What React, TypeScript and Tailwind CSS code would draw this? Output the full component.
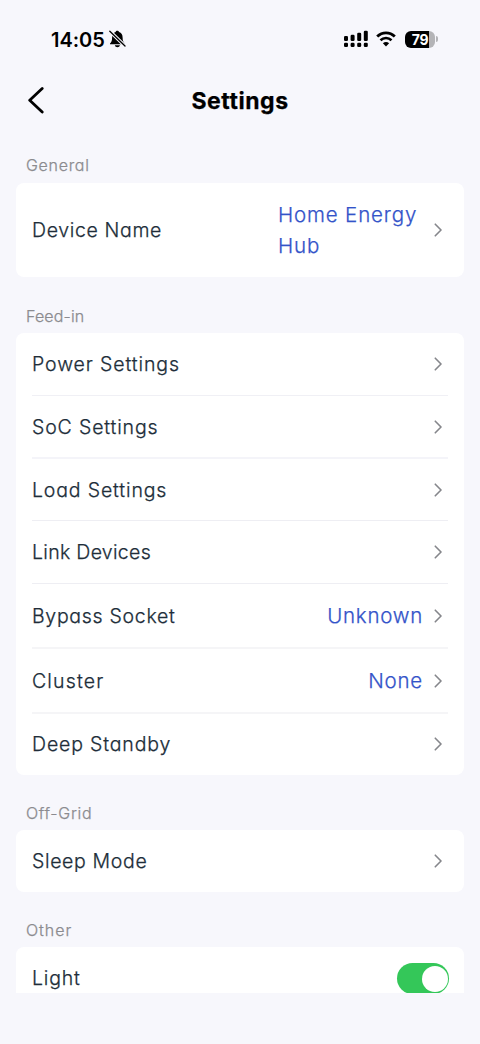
import React from "react";

function Chevron() {
  return (
    <svg className="h-[14px] w-2 shrink-0" viewBox="0 0 8 14" fill="none">
      <path d="M1.3 1.2 L7 7 L1.3 12.8" stroke="#85868b" strokeWidth="1.6" strokeLinecap="round" strokeLinejoin="round" />
    </svg>
  );
}

function SectionTitle({ children, className }: { children: React.ReactNode; className: string }) {
  return (
    <h2 className={`flex items-center pl-[10px] text-[16px] leading-5 text-[#8b8b8f] ${className}`}>
      <span>{children}</span>
    </h2>
  );
}

type RowProps = { label: string; tracking: string; size: string; value?: string; valueTracking?: string };

function Row({ label, tracking, size, value, valueTracking = "" }: RowProps) {
  return (
    <div className={`mx-4 flex items-center justify-between ${size}`}>
      <span className={`whitespace-nowrap pt-[1.5px] text-[19.5px] text-[#202d39] ${tracking}`}>{label}</span>
      <div className="flex items-center gap-[11px] pr-[6px]">
        {value && <span className={`whitespace-nowrap pt-[2px] text-[20.5px] text-[#3353c9] ${valueTracking}`}>{value}</span>}
        <Chevron />
      </div>
    </div>
  );
}

function StatusBar() {
  return (
    <div className="flex h-[78px] items-center justify-between pl-[51px] pr-[42px] [-webkit-text-stroke:0px]">
      <div className="flex items-center gap-1 text-black">
        <span className="pt-px text-[20px] font-semibold leading-6 tracking-[-0.05px]">14:05</span>
        <svg className="h-[18px] w-[17px]" viewBox="0 0 17 18">
          <path d="M8.3 .8c.9 0 1.5.5 1.7 1.2 2.5.8 3.6 2.8 3.6 5.4 0 3.3.8 4.6 2.2 6v.9H1v-.9c1.4-1.4 2.1-2.7 2.1-6 0-2.6 1.1-4.6 3.5-5.4.2-.7.8-1.2 1.7-1.2z" fill="#000" />
          <path d="M5.8 15.3h5.2c-.3 1.2-1.3 1.9-2.6 1.9s-2.3-.7-2.6-1.9z" fill="#000" />
          <path d="M.8 1.2 L16 16" stroke="#f7f7fc" strokeWidth="3.4" />
          <path d="M.8 1.2 L16 16" stroke="#000" strokeWidth="1.3" strokeLinecap="round" />
        </svg>
      </div>
      <div className="flex items-center">
        <svg className="h-[18px] w-6" viewBox="0 0 24 18">
          <g fill="#000">
            <rect x="0" y="6" width="4" height="5" rx="1.3" />
            <rect x="6.6" y="4.7" width="4" height="6.3" rx="1.3" />
            <rect x="13.2" y="2.8" width="4" height="8.2" rx="1.3" />
            <rect x="19.8" y="0.8" width="4" height="10.2" rx="1.3" />
            <rect x="0" y="12.7" width="4" height="4.3" rx="1.3" />
            <rect x="6.6" y="12.7" width="4" height="4.3" rx="1.3" />
            <rect x="13.2" y="12.7" width="4" height="4.3" rx="1.3" />
            <rect x="19.8" y="12.7" width="4" height="4.3" rx="1.3" />
          </g>
        </svg>
        <svg className="ml-2 h-4 w-5" viewBox="0 0 20 16" fill="none">
          <path d="M1.2 5.6 C6.2 .6 13.8 .6 18.8 5.6" stroke="#000" strokeWidth="2.8" />
          <path d="M4.5 9.2 C7.6 6.2 12.4 6.2 15.5 9.2" stroke="#000" strokeWidth="2.6" />
          <path d="M10 15.4 L6.9 12.3 C8.6 10.6 11.4 10.6 13.1 12.3 Z" fill="#000" />
        </svg>
        <div className="ml-[9px] flex h-[17px] w-[30px] items-center justify-center rounded-[6px] bg-[linear-gradient(to_right,#000_79%,#b4b4b7_79%)] text-[14px] font-bold leading-[17px] tracking-[-0.4px] text-white">
          79
        </div>
        <div className="ml-px h-[6px] w-[2px] rounded-r-full bg-[#b4b4b7]" />
      </div>
    </div>
  );
}

export default function App() {
  return (
    <div className="flex h-[1044px] w-[480px] flex-col overflow-hidden bg-[#f7f7fc] font-['Inter','Liberation_Sans',sans-serif] font-light [-webkit-text-stroke:0.25px] [font-feature-settings:'cv11']">
      <StatusBar />
      <header className="grid h-[45px] grid-cols-[1fr_auto_1fr] items-center pl-7">
        <svg className="-mt-px h-[28px] w-[17px]" viewBox="0 0 17 28" fill="none">
          <path d="M14.2 2.5 L1.7 14.2 L14.2 26" stroke="#000" strokeWidth="2.8" strokeLinecap="round" strokeLinejoin="round" />
        </svg>
        <h1 className="mr-7 text-[23px] font-bold leading-8 tracking-[0.55px] text-black">Settings</h1>
      </header>
      <main className="h-[869.5px] shrink-0 overflow-hidden px-4">
        <SectionTitle className="h-[59px] pt-[25px] tracking-[0.7px]">General</SectionTitle>
        <section className="mt-[0.5px] flex h-[94.5px] items-center justify-between rounded-[8px] bg-white px-4">
          <span className="pt-[2px] text-[19.5px] tracking-[0.65px] text-[#202d39]">Device Name</span>
          <div className="flex items-center pr-[6px]">
            <span className="w-[156px] pt-px text-[20.5px] leading-[31px] tracking-[0.85px] text-[#3353c9]">Home Energy Hub</span>
            <Chevron />
          </div>
        </section>
        <SectionTitle className="h-14 pt-[22px] tracking-[0.15px]">Feed-in</SectionTitle>
        <section className="h-[441.5px] rounded-[8px] bg-white">
          <Row label="Power Settings" tracking="tracking-[0.9px]" size="h-[63px] border-b border-[#f0f0f5]" />
          <Row label="SoC Settings" tracking="tracking-[0.85px]" size="h-[63px] border-b-2 border-[#f4f4f9]" />
          <Row label="Load Settings" tracking="tracking-[0.85px]" size="h-[62px] border-b border-[#eeeef3]" />
          <Row label="Link Devices" tracking="tracking-[0.3px]" size="h-[63px] border-b border-[#eeeef3]" />
          <Row label="Bypass Socket" tracking="tracking-[0.7px]" size="h-[65px] border-b-2 border-[#f5f5f7]" value="Unknown" valueTracking="tracking-[0.75px]" />
          <Row label="Cluster" tracking="tracking-[1.15px]" size="h-[65px] border-b-2 border-[#f5f5f7]" value="None" valueTracking="tracking-[0.8px]" />
          <Row label="Deep Standby" tracking="tracking-[0.85px]" size="h-[60.5px]" />
        </section>
        <SectionTitle className="h-[55.5px] pt-[22px] tracking-[0.7px]">Off-Grid</SectionTitle>
        <section className="rounded-[8px] bg-white">
          <Row label="Sleep Mode" tracking="tracking-[0.65px]" size="h-[62px]" />
        </section>
        <SectionTitle className="h-[55px] pt-[20px] tracking-[0.95px]">Other</SectionTitle>
        <section className="flex h-[63px] items-center justify-between rounded-[8px] bg-white px-4">
          <span className="pt-px text-[19.5px] tracking-[0.8px] text-[#202d39]">Light</span>
          <button type="button" role="switch" aria-checked="true" aria-label="Light" className="-mr-px flex h-[31px] w-[52px] items-center justify-end rounded-full bg-[#34c759] pr-[1.5px]">
            <span className="size-[26px] rounded-full bg-white" />
          </button>
        </section>
      </main>
    </div>
  );
}
